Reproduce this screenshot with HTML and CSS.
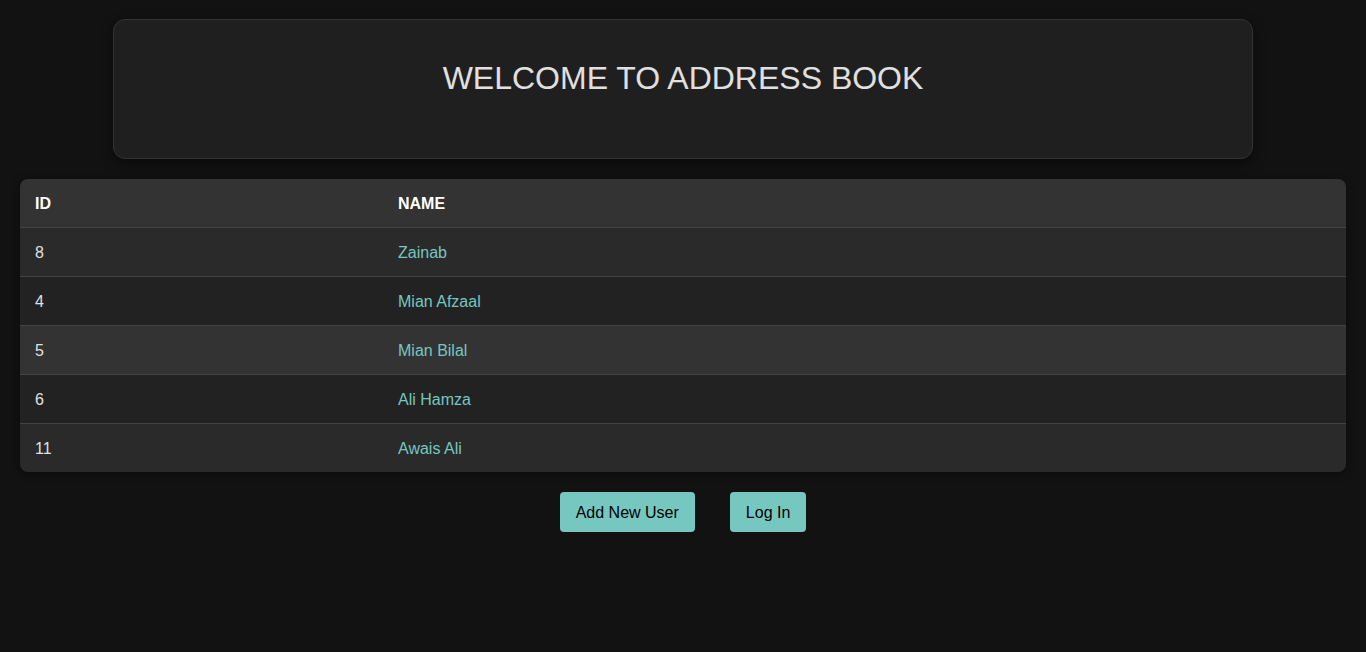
FILE: index.html
```html
<!DOCTYPE html>
<html lang="en">
<head>
<meta charset="utf-8">
<title>Address Book</title>
<link rel="stylesheet" href="styles.css">
</head>
<body>
  <div class="container">
    <header class="hero">
      <h1 class="hero-title">WELCOME TO ADDRESS BOOK</h1>
    </header>
  </div>
  <div class="table-wrap">
    <table class="users">
      <thead>
        <tr><th class="col-id">ID</th><th>NAME</th></tr>
      </thead>
      <tbody>
        <tr class="odd"><td>8</td><td><a href="#" class="user-link">Zainab</a></td></tr>
        <tr class="even"><td>4</td><td><a href="#" class="user-link">Mian Afzaal</a></td></tr>
        <tr class="hover"><td>5</td><td><a href="#" class="user-link">Mian Bilal</a></td></tr>
        <tr class="even"><td>6</td><td><a href="#" class="user-link">Ali Hamza</a></td></tr>
        <tr class="odd"><td>11</td><td><a href="#" class="user-link">Awais Ali</a></td></tr>
      </tbody>
    </table>
  </div>
  <div class="actions">
    <a href="#" class="btn">Add New User</a>
    <a href="#" class="btn">Log In</a>
  </div>
</body>
</html>
```
FILE: styles.css
```css
* { box-sizing: border-box; }
html, body {
  margin: 0;
  padding: 0;
  background: #121212;
  color: #e0e0e0;
  font-family: "Liberation Sans", Arial, sans-serif;
  font-size: 16px;
}
.container {
  max-width: 1140px;
  margin: 19px auto 0;
}
.hero {
  background: #1f1f1f;
  border: 1px solid #333;
  border-radius: 12px;
  box-shadow: 0 4px 12px rgba(0, 0, 0, 0.5);
  height: 140px;
  padding: 40px 20px 0;
  text-align: center;
}
.hero-title {
  margin: 0;
  font-size: 32px;
  font-weight: normal;
  line-height: 37px;
  color: #e0e0e0;
}
.table-wrap {
  margin: 20px 20px 0;
  border-radius: 8px;
  overflow: hidden;
  box-shadow: 0 2px 8px rgba(0, 0, 0, 0.4);
}
.users {
  width: 100%;
  border-collapse: collapse;
}
.users th, .users td {
  padding: 16px 15px 14px;
  text-align: left;
  line-height: 18px;
}
.users th {
  background: #333;
  color: #fff;
  font-weight: bold;
  border-bottom: 1px solid #444;
}
.users td {
  border-bottom: 1px solid #444;
}
.users tbody tr:last-child td { border-bottom: none; }
.col-id { width: 363px; }
.odd { background: #2a2a2a; }
.even { background: #222; }
.hover { background: #333; }
.user-link {
  color: #76c7c0;
  text-decoration: none;
}
.actions {
  display: flex;
  justify-content: center;
  gap: 35px;
  margin-top: 20px;
}
.btn {
  display: inline-block;
  background: #76c7c0;
  color: #000;
  text-decoration: none;
  padding: 12px 16px 10px;
  line-height: 18px;
  border-radius: 4px;
  font-size: 16px;
}
```
